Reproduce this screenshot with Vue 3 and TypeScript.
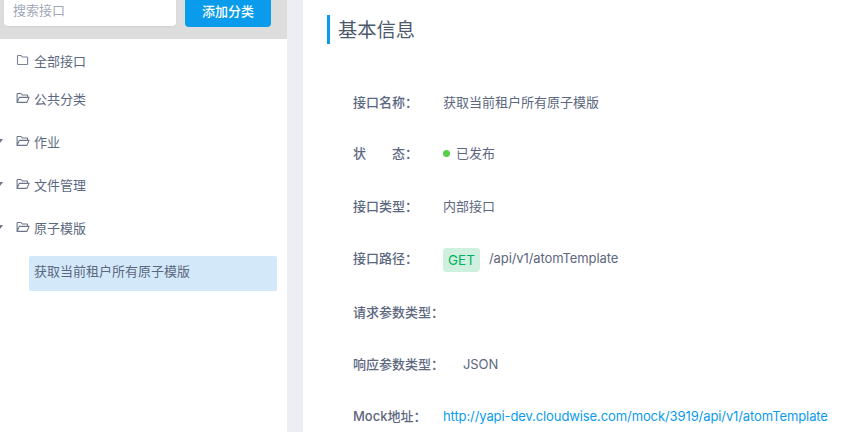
<script setup lang="ts">
interface Cat { name: string; open: boolean; arrow: boolean }
const cats: Cat[] = [
  { name: '全部接口', open: false, arrow: false },
  { name: '公共分类', open: true, arrow: false },
  { name: '作业', open: true, arrow: true },
  { name: '文件管理', open: true, arrow: true },
  { name: '原子模版', open: true, arrow: true },
]
</script>

<template>
  <div class="page">
    <aside class="side">
      <div class="search">
        <div class="input">搜索接口</div>
        <div class="btn">添加分类</div>
      </div>
      <ul class="tree">
        <li v-for="c in cats" :key="c.name" class="row">
          <span v-if="c.arrow" class="arrow"></span>
          <svg v-if="!c.open" class="ico" viewBox="0 0 14 12" width="14" height="12">
            <path d="M1.5 2.2 a.7 .7 0 0 1 .7-.7 h2.8 l1.3 1.5 h4.6 a.7 .7 0 0 1 .7 .7 v6.1 a.7 .7 0 0 1-.7 .7 H2.2 a.7 .7 0 0 1-.7-.7 z" fill="none" stroke="#7a8397" stroke-width="1.1"/>
          </svg>
          <svg v-else class="ico" viewBox="0 0 14 12" width="14" height="12">
            <path d="M1.1 10.4 V2.2 a.7 .7 0 0 1 .7-.7 h3.2 l1.3 1.5 h4.6 a.7 .7 0 0 1 .7 .7 v1.2 M1.1 10.4 l2.2-5 h9.8 l-2.2 5 z" fill="none" stroke="#6b7488" stroke-width="1.1" stroke-linejoin="round"/>
          </svg>
          <span>{{ c.name }}</span>
        </li>
        <li class="leaf">获取当前租户所有原子模版</li>
      </ul>
    </aside>
    <main class="main">
      <h2 class="title">基本信息</h2>
      <dl class="info">
        <div class="item"><dt class="w90">接口名称：</dt><dd>获取当前租户所有原子模版</dd></div>
        <div class="item lift"><dt class="w90 just"><span>状</span><span>态：</span></dt><dd class="status"><i class="dot"></i>已发布</dd></div>
        <div class="item"><dt class="w90">接口类型：</dt><dd>内部接口</dd></div>
        <div class="item tall"><dt class="w90">接口路径：</dt><dd class="path"><span class="get">GET</span><span class="tight">/api/v1/atomTemplate</span></dd></div>
        <div class="item"><dt class="w90">请求参数类型：</dt><dd></dd></div>
        <div class="item"><dt class="w110">响应参数类型：</dt><dd class="tight">JSON</dd></div>
        <div class="item"><dt class="w90">Mock地址：</dt><dd><a class="link tight">http://yapi-dev.cloudwise.com/mock/3919/api/v1/atomTemplate</a></dd></div>
      </dl>
    </main>
  </div>
</template>

<style>
html, body { margin: 0; background: #fff; }
</style>

<style scoped>
.page {
  width: 855px; height: 432px; overflow: hidden; display: flex; background: #eceef3;
  font-family: Inter, "Noto Sans CJK SC", sans-serif; font-size: 13px; color: #5c6780;
}
.side { width: 287px; flex: none; background: #fff; }
.search {
  height: 39px; box-sizing: border-box; background: #ddd; display: flex; align-items: flex-end;
  padding: 0 0 12px 4px;
}
.input {
  width: 172px; height: 32px; box-sizing: border-box; background: #fff; border-radius: 4px; flex: none;
  margin-bottom: 1px; padding-left: 9px; line-height: 33px; color: #a1a8b7; box-shadow: 0 1px 2px rgba(0,0,0,.06);
}
.btn {
  width: 86px; height: 32px; flex: none; margin-left: 9px; background: #0a9bec; color: #fff;
  border-radius: 4px; text-align: center; line-height: 32px; font-weight: 500;
}
.tree { list-style: none; margin: 0; padding: 0; }
.row {
  height: 43px; display: flex; align-items: center; padding-left: 16px; gap: 4px; position: relative;
}
.row:first-child { height: 38px; margin-top: 2px; }
.row:nth-child(2) { height: 38px; margin-bottom: 2.5px; }
.ico { flex: none; }
.arrow {
  position: absolute; left: -3px; top: 50%; margin-top: -2px; width: 0; height: 0;
  border: 3px solid transparent; border-top: 4px solid #6b7488; border-bottom: 0;
}
.leaf {
  margin: 7px 10px 0 29px; height: 35px; background: #d3e9fa; border-radius: 2px; padding-left: 5px;
  line-height: 30px;
}
.main { margin-left: 16px; flex: 1; background: #fff; padding: 15px 0 0 24px; }
.title {
  margin: 0; height: 29px; line-height: 31px; border-left: 3px solid #0a9bec; padding-left: 8px;
  font-size: 19.3px; font-weight: 400; color: #4c586c;
}
.info { margin: 48px 0 0 26px; }
.item { height: 52px; display: flex; align-items: flex-start; line-height: 20px; }
.lift { line-height: 18px; }
.tall { height: 54px; }
dt { font-weight: 500; color: #5c6780; flex: none; white-space: nowrap; }
dd { margin: 0; }
.w90 { width: 90px; }
.w110 { width: 110px; }
.just { display: flex; justify-content: space-between; width: 65px; margin-right: 25px; }
.status { display: flex; align-items: center; height: 18px; }
.dot { width: 7px; height: 7px; border-radius: 50%; background: #57cf4b; margin-right: 6px; }
.path { display: flex; align-items: flex-start; gap: 9px; }
.get {
  background: #cff0df; color: #00b25f; border-radius: 4px; width: 37px; height: 24px; line-height: 25px;
  text-align: center; flex: none; font-size: 13.5px;
}
.tight { letter-spacing: -0.1px; }
.link { color: #0a9bec; }
</style>
